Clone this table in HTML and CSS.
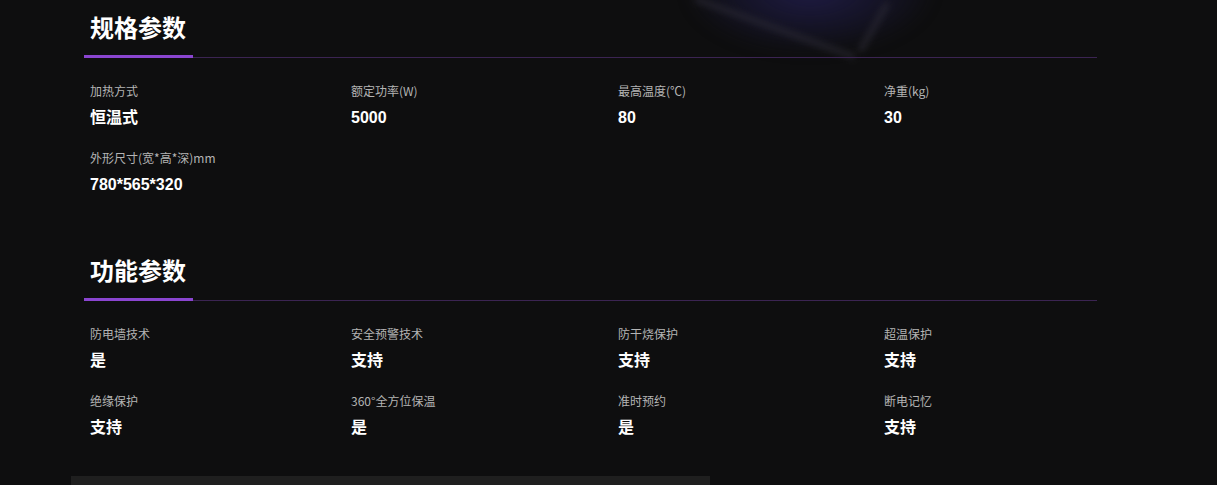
FILE: index.html
```html
<!DOCTYPE html>
<html lang="zh-CN">
<head>
<meta charset="utf-8">
<title>参数</title>
<link rel="stylesheet" href="styles.css">
</head>
<body>
<div class="backdrop"><div class="glow"></div><div class="beam beam-a"></div><div class="beam beam-b"></div></div>
<main class="wrap">
  <section class="spec">
    <header class="spec-head"><h2>规格参数</h2><span class="bar"></span></header>
    <div class="grid">
      <div class="item"><div class="label">加热方式</div><div class="value">恒温式</div></div>
      <div class="item"><div class="label">额定功率(W)</div><div class="value">5000</div></div>
      <div class="item"><div class="label">最高温度(℃)</div><div class="value">80</div></div>
      <div class="item"><div class="label">净重(kg)</div><div class="value">30</div></div>
      <div class="item"><div class="label">外形尺寸(宽*高*深)mm</div><div class="value">780*565*320</div></div>
    </div>
  </section>
  <section class="spec second">
    <header class="spec-head"><h2>功能参数</h2><span class="bar"></span></header>
    <div class="grid">
      <div class="item"><div class="label">防电墙技术</div><div class="value">是</div></div>
      <div class="item"><div class="label">安全预警技术</div><div class="value">支持</div></div>
      <div class="item"><div class="label">防干烧保护</div><div class="value">支持</div></div>
      <div class="item"><div class="label">超温保护</div><div class="value">支持</div></div>
      <div class="item"><div class="label">绝缘保护</div><div class="value">支持</div></div>
      <div class="item"><div class="label">360°全方位保温</div><div class="value">是</div></div>
      <div class="item"><div class="label">准时预约</div><div class="value">是</div></div>
      <div class="item"><div class="label">断电记忆</div><div class="value">支持</div></div>
    </div>
  </section>
  <div class="footer-box"></div>
</main>
</body>
</html>
```
FILE: styles.css
```css
html, body {
  margin: 0;
  padding: 0;
  background: #0e0e0f;
  height: 485px;
  overflow: hidden;
}
body {
  position: relative;
  font-family: "Liberation Sans", "Noto Sans CJK SC", sans-serif;
  color: #fff;
}
.backdrop {
  position: absolute;
  left: 560px;
  top: 0;
  width: 500px;
  height: 70px;
  overflow: hidden;
  pointer-events: none;
}
.glow {
  position: absolute;
  left: 130px;
  top: -70px;
  width: 240px;
  height: 120px;
  border-radius: 50%;
  background: radial-gradient(ellipse at center, rgba(34,30,78,0.85) 0%, rgba(26,24,56,0.55) 45%, rgba(14,14,15,0) 75%);
  filter: blur(8px);
}
.beam {
  position: absolute;
  height: 6px;
  background: rgba(48,46,56,0.55);
  filter: blur(3px);
  transform-origin: left center;
}
.beam-a {
  left: 135px;
  top: -4px;
  width: 170px;
  transform: rotate(20deg);
}
.beam-b {
  left: 300px;
  top: 48px;
  width: 55px;
  transform: rotate(-60deg);
}
.wrap {
  position: relative;
  margin-left: 84px;
  width: 1013px;
}
.spec-head {
  position: relative;
  border-bottom: 1px solid #3b2452;
  padding: 8px 6px 12px;
}
.spec-head h2 {
  margin: 0;
  font-family: "Noto Sans CJK SC", sans-serif;
  font-size: 24px;
  font-weight: 700;
  line-height: 37px;
}
.bar {
  position: absolute;
  left: 0;
  bottom: -1px;
  width: 109px;
  height: 3px;
  background: #8a45d0;
}
.grid {
  display: grid;
  grid-template-columns: 261px 267px 266px 1fr;
  row-gap: 20px;
  padding: 24px 6px 0;
}
.label {
  font-family: "Noto Sans CJK SC", sans-serif;
  font-size: 12px;
  line-height: 18px;
  color: #b4b4b4;
}
.value {
  margin-top: 7px;
  font-family: "Liberation Sans", "Noto Sans CJK SC", sans-serif;
  font-size: 16px;
  font-weight: 700;
  line-height: 22px;
  color: #fff;
}
.second {
  margin-top: 47px;
}
.footer-box {
  margin-top: 37px;
  margin-left: -13px;
  width: 639px;
  height: 40px;
  background: #1f1f1f;
}
```
